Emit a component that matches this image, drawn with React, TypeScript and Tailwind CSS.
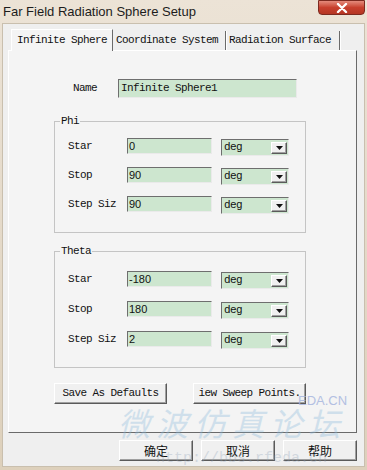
import React, { FC } from 'react';

const mono = "font-['Liberation_Mono','DejaVu_Sans_Mono',monospace] text-[11px] tracking-[-0.6px] text-[#111]";
const sans = "font-['Liberation_Sans',Arial,sans-serif] text-[11px] text-[#111]";
const cjk = "font-['Noto_Sans_CJK_SC','Noto_Sans',sans-serif] text-[12px] text-[#111]";

const sunken = 'border-t border-l border-t-[#6e6e6e] border-l-[#6e6e6e] border-b border-r border-b-[#eaeaea] border-r-[#eaeaea] bg-[#cde6cf]';
const raised = 'border-t border-l border-t-white border-l-white border-b border-r border-b-[#5a5a5a] border-r-[#5a5a5a] bg-[#f0f0f0] shadow-[inset_-1px_-1px_0_#a0a0a0]';

interface RowProps {
  label: string;
  value: string;
}

const UnitSelect: FC = () => (
  <div className={`${sunken} w-[68px] h-[17px] mt-[1px] flex items-center justify-between pl-[2px] pr-[1px]`}>
    <span className={`${mono} leading-none`}>deg</span>
    <span className={`${raised} w-[16px] h-[12px] flex items-center justify-center`}>
      <svg width="7" height="4" viewBox="0 0 7 4">
        <path d="M0 0h7L3.5 4z" fill="#111" />
      </svg>
    </span>
  </div>
);

const Row: FC<RowProps> = ({ label, value }) => (
  <div className="flex items-start h-[17px]">
    <span className={`${mono} w-[72px] pl-[13px] leading-[17px] whitespace-nowrap`}>{label}</span>
    <div className={`${sunken} w-[85px] h-[16px] pl-[1px] ${sans} leading-[15px]`}>{value}</div>
    <div className="ml-[9px]">
      <UnitSelect />
    </div>
  </div>
);

interface GroupProps {
  title: string;
  rows: RowProps[];
  className: string;
}

const Group: FC<GroupProps> = ({ title, rows, className }) => (
  <fieldset className={`ml-[45px] w-[252px] border border-[#c4c4c4] ${className}`}>
    <legend className={`${mono} ml-[5px] px-[1px] leading-[12px]`}>{title}</legend>
    {rows.map(row => (
      <Row key={row.label} {...row} />
    ))}
  </fieldset>
);

const Tab: FC<{ text: string; active?: boolean; width: string }> = ({ text, active, width }) => (
  <div
    className={`${mono} ${width} flex items-center whitespace-nowrap ${
      active
        ? 'h-[22px] -mb-[1px] z-10 bg-[#f4f4f4] border-t border-l border-t-white border-l-white border-r border-r-[#6a6a6a] pl-[5px] relative'
        : 'h-[19px] mt-[2px] pl-[2px] border-r border-r-[#6a6a6a] shadow-[1px_0_0_white]'
    }`}
  >
    {text}
  </div>
);

const App: FC = () => {
  const phi = [
    { label: 'Star', value: '0' },
    { label: 'Stop', value: '90' },
    { label: 'Step Siz', value: '90' },
  ];
  const theta = [
    { label: 'Star', value: '-180' },
    { label: 'Stop', value: '180' },
    { label: 'Step Siz', value: '2' },
  ];

  return (
    <div className="w-[367px] h-[470px] bg-gradient-to-b from-[#ece3d6] to-[#ddd0bb] flex flex-col relative overflow-hidden">
      <div className="h-[23px] flex items-start justify-between pl-[3px] pr-[2px]">
        <span className="font-['Liberation_Sans',Arial,sans-serif] text-[13px] text-[#1c1c1c] leading-[23px]">
          Far Field Radiation Sphere Setup
        </span>
        <div className="w-[47px] h-[15px] rounded-b-[4px] bg-gradient-to-b from-[#e48a7c] via-[#c8402e] to-[#b53624] border border-[#7c2a20] flex items-center justify-center">
          <svg width="12" height="10" viewBox="0 0 12 10">
            <path d="M2 1l8 8M10 1l-8 8" stroke="white" strokeWidth="2.4" strokeLinecap="round" />
          </svg>
        </div>
      </div>

      <div className="mx-[2px] h-[444px] bg-[#efefef] border border-[#c9bfae] pl-[5px] pr-[7px] flex flex-col">
        <div className="flex pl-[3px] h-[26px] items-end">
          <Tab text="Infinite Sphere" active width="w-[102px]" />
          <div className="flex items-start h-[21px]">
            <Tab text="Coordinate System" width="w-[112px] ml-[1px]" />
            <Tab text="Radiation Surface" width="w-[113px] ml-[1px]" />
          </div>
        </div>

        <div className="h-[383px] bg-[#f4f4f4] border-t border-l border-t-white border-l-white border-r border-b border-r-[#6a6a6a] border-b-[#6a6a6a] flex flex-col">
          <div className="flex items-center mt-[28px] h-[19px]">
            <span className={`${mono} ml-[64px] w-[45px]`}>Name</span>
            <div className={`${sunken} w-[179px] h-[19px] pl-[2px] ${mono} leading-[17px]`}>Infinite Sphere1</div>
          </div>

          <Group title="Phi" rows={phi} className="mt-[17px] pt-[11px] pb-[19px] flex flex-col gap-[12px]" />
          <Group title="Theta" rows={theta} className="mt-[12px] pt-[14px] pb-[19px] flex flex-col gap-[13px]" />

          <div className="flex ml-[45px] mt-[15px] gap-[26px]">
            <div className={`${raised} ${mono} w-[113px] h-[21px] flex items-center justify-center`}>Save As Defaults</div>
            <div className={`${raised} ${mono} w-[113px] h-[21px] flex items-center justify-center`}>iew Sweep Points.</div>
          </div>
        </div>

        <div className="flex justify-end gap-[8px] mt-[7px]">
          {['确定', '取消', '帮助'].map(t => (
            <div key={t} className={`${raised} ${cjk} w-[74px] h-[21px] flex items-center justify-center`}>
              {t}
            </div>
          ))}
        </div>
      </div>

      <span className="absolute left-[298px] top-[391px] font-['Liberation_Sans',Arial,sans-serif] text-[13px] text-[#a3b3de] opacity-80 pointer-events-none">
        EDA.CN
      </span>
      <span className="absolute left-[118px] top-[402px] font-['Noto_Sans_CJK_SC',sans-serif] text-[32px] leading-[40px] italic tracking-[6px] text-[#8dbbdc] opacity-35 pointer-events-none whitespace-nowrap">
        微波仿真论坛
      </span>
      <span className="absolute left-[156px] top-[451px] font-['Liberation_Mono',monospace] text-[15px] leading-[16px] text-[#8da0b6] opacity-30 pointer-events-none whitespace-nowrap">
        http://bbs.rfeda.cn
      </span>
    </div>
  );
};

export default App;
